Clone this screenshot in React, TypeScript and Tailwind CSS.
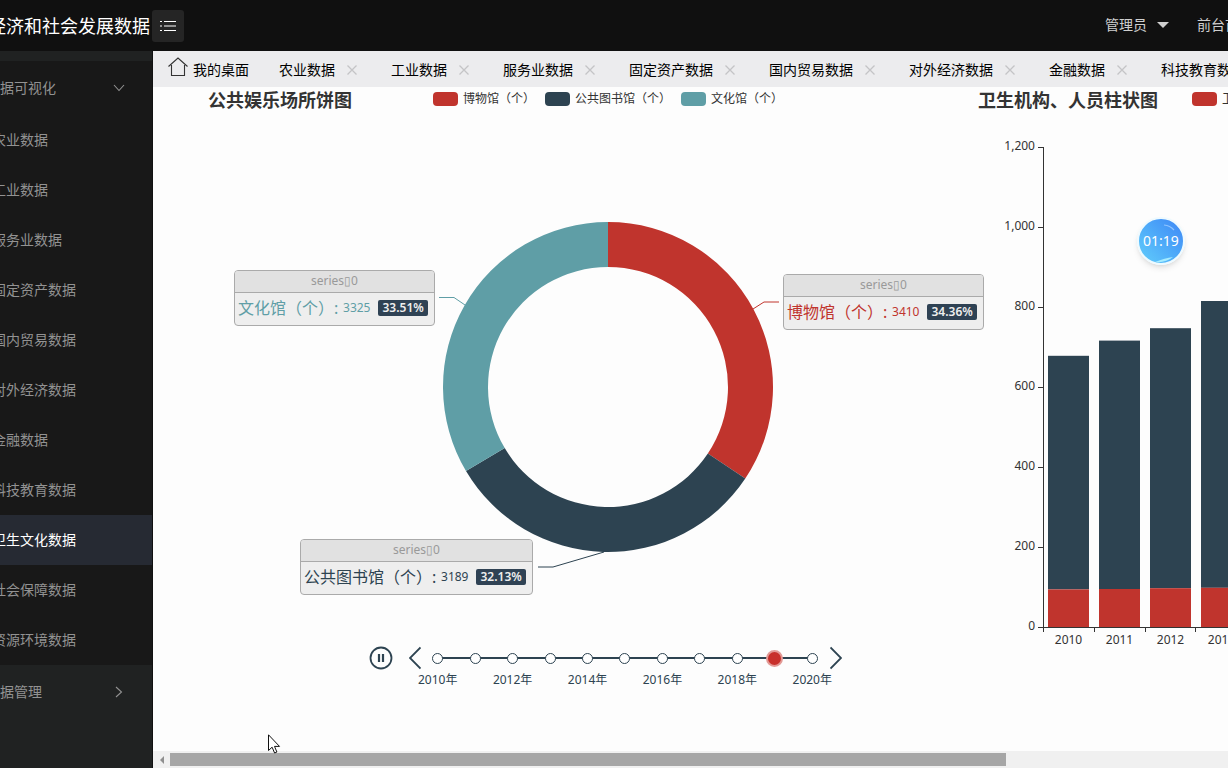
import React from "react";

const RED = "#c0342d";
const NAVY = "#2d4351";
const TEAL = "#5f9ea6";

const menuItems = [
  "农业数据",
  "工业数据",
  "服务业数据",
  "固定资产数据",
  "国内贸易数据",
  "对外经济数据",
  "金融数据",
  "科技教育数据",
  "卫生文化数据",
  "社会保障数据",
  "资源环境数据",
];

const tabs = menuItems.slice(0, 8);

const slices = [
  { name: "博物馆（个）", value: 3410, percent: "34.36%", color: RED, swatch: "bg-[#c0342d]" },
  { name: "公共图书馆（个）", value: 3189, percent: "32.13%", color: NAVY, swatch: "bg-[#2d4351]" },
  { name: "文化馆（个）", value: 3325, percent: "33.51%", color: TEAL, swatch: "bg-[#5f9ea6]" },
];

const bars = [
  { year: "2010", low: 94, total: 678 },
  { year: "2011", low: 95, total: 716 },
  { year: "2012", low: 97, total: 747 },
  { year: "2013", low: 98, total: 815 },
];

const years = Array.from({ length: 11 }, (_, i) => 2010 + i);
const activeYear = 2019;

function Header() {
  return (
    <header className="flex h-[51px] shrink-0 items-center overflow-hidden bg-[#101010]">
      <h1 className="flex w-[150px] shrink-0 justify-end overflow-hidden text-lg leading-6 whitespace-nowrap text-white">
        经济和社会发展数据
      </h1>
      <button
        type="button"
        aria-label="菜单"
        className="ml-[2px] flex size-8 shrink-0 items-center justify-center rounded-[3px] bg-[#252525] text-white"
      >
        <svg width="16" height="12" viewBox="0 0 16 12" stroke="currentColor" strokeWidth="1.2">
          <path d="M0 1.5h2M4 1.5h12M0 6h2M4 6h12M0 10.5h2M4 10.5h12" />
        </svg>
      </button>
      <nav className="-mr-[25px] ml-auto flex shrink-0 items-center pb-[2px] text-sm leading-5 text-[#cfcfcf]">
        <button type="button" className="flex items-center gap-[10px]">
          管理员
          <svg width="12" height="6" viewBox="0 0 12 6" fill="currentColor">
            <path d="M0 0h12L6 6z" />
          </svg>
        </button>
        <a href="#home" className="ml-7 whitespace-nowrap">
          前台首页
        </a>
      </nav>
    </header>
  );
}

function Sidebar() {
  return (
    <aside className="w-[153px] shrink-0 overflow-hidden border-r border-[#111] bg-[#202222] pt-[10px] text-sm text-[#929292]">
      <nav className="-ml-[14px]">
        <div className="bg-[#181818]">
          <button type="button" className="flex h-[54px] w-full items-center justify-between pr-[27px]">
            数据可视化
            <svg width="12" height="8" viewBox="0 0 12 8" fill="none" stroke="currentColor" strokeWidth="1.1">
              <path d="M1 1l5 5.5L11 1" />
            </svg>
          </button>
          <ul>
            {menuItems.map((item) => (
              <li key={item}>
                <a
                  href={"#" + item}
                  className={
                    item === "卫生文化数据"
                      ? "flex h-[50px] items-center bg-[#262a33] pl-[6px] text-white"
                      : "flex h-[50px] items-center pl-[6px]"
                  }
                >
                  {item}
                </a>
              </li>
            ))}
          </ul>
        </div>
        <button type="button" className="flex h-[54px] w-full items-center justify-between pr-[29px]">
          数据管理
          <svg width="8" height="12" viewBox="0 0 8 12" fill="none" stroke="currentColor" strokeWidth="1.1">
            <path d="M1 1l5.5 5L1 11" />
          </svg>
        </button>
      </nav>
    </aside>
  );
}

function TabBar() {
  return (
    <nav className="flex h-9 shrink-0 items-center overflow-hidden bg-[#ececee] text-sm leading-5 whitespace-nowrap text-black">
      <a href="#desk" className="flex shrink-0 items-center gap-[5px] px-[15px]">
        <svg width="20" height="20" viewBox="0 0 20 20" fill="none" stroke="#333" strokeWidth="1.1" className="-mt-1">
          <path d="M.5 9.5L10 1l9.500 8.500M3.500 8v10.500h13V8" />
        </svg>
        <span className="pt-[2px]">我的桌面</span>
      </a>
      {tabs.map((tab) => (
        <div key={tab} className="flex shrink-0 items-center gap-2 px-[15px] pt-[2px]">
          <a href={"#tab-" + tab}>{tab}</a>
          <button type="button" aria-label={"关闭" + tab} className="flex w-[18px] justify-center text-[#c4c4c6]">
            <svg width="10" height="10" viewBox="0 0 10 10" stroke="currentColor" strokeWidth="1.3">
              <path d="M.5.5l9 9M9.500.5l-9 9" />
            </svg>
          </button>
        </div>
      ))}
    </nav>
  );
}

function LegendItem({ name, swatch }: { name: string; swatch: string }) {
  return (
    <li className="flex items-center gap-[5px]">
      <span className={"h-[14px] w-[25px] rounded " + swatch} />
      <span>{name}</span>
    </li>
  );
}

function ringSlice(start: number, end: number) {
  const at = (r: number, t: number) =>
    `${608 + r * Math.sin(t * 2 * Math.PI)} ${387 - r * Math.cos(t * 2 * Math.PI)}`;
  return `M${at(165, start)}A165 165 0 0 1 ${at(165, end)}L${at(120, end)}A120 120 0 0 0 ${at(120, start)}Z`;
}

function SliceLabel({ index, place }: { index: number; place: string }) {
  const s = slices[index];
  return (
    <div
      className={
        "absolute overflow-hidden rounded border border-[#aaa] bg-[#eee] whitespace-nowrap " + place
      }
    >
      <div className="h-[22px] border-b border-[#aaa] bg-[#e1e1e1] text-center text-xs leading-5 text-[#999]">
        series▯0
      </div>
      <div className="flex h-8 items-center pr-[6px] pb-[2px] pl-[3px]" style={{ color: s.color }}>
        <span className="text-base leading-5">{s.name}</span>
        <span className="w-[9px] text-base leading-5">:</span>
        <span className="text-xs leading-5">{s.value}</span>
        <span className="ml-2 rounded-[2px] bg-[#2f4254] px-1 text-xs leading-4 font-semibold text-[#eee]">
          {s.percent}
        </span>
      </div>
    </div>
  );
}

function Timeline() {
  return (
    <div className="flex pl-[216px] text-[#2d4351]">
      <button type="button" aria-label="暂停" className="size-6">
        <svg width="24" height="24" viewBox="0 0 24 24" fill="none" stroke="currentColor" strokeWidth="1.8">
          <circle cx="12" cy="12" r="10.500" />
          <path d="M10 8v8M14 8v8" strokeWidth="2.200" />
        </svg>
      </button>
      <button type="button" aria-label="上一年" className="ml-4 h-6 w-3">
        <svg width="12" height="24" viewBox="0 0 12 24" fill="none" stroke="currentColor" strokeWidth="1.800">
          <path d="M11.500 1.500L1 12l10.500 10.500" />
        </svg>
      </button>
      <ol className="-mr-px -ml-[2px] grid w-[412px] grid-cols-11">
        {years.map((year, i) => (
          <li key={year} className="relative flex flex-col items-center">
            {i < 10 && <span className="absolute top-[11px] left-1/2 h-[2px] w-full bg-[#2d4351]" />}
            <button type="button" aria-label={year + "年"} className="relative flex size-6 items-center justify-center">
              {year === activeYear ? (
                <span className="size-[17px] rounded-full border-2 border-[#e39a96] bg-[#c8302b]" />
              ) : (
                <span className="size-[11px] rounded-full border border-[#2d4351] bg-white" />
              )}
            </button>
            {i % 2 === 0 && <span className="text-xs leading-5 whitespace-nowrap">{year}年</span>}
          </li>
        ))}
      </ol>
      <button type="button" aria-label="下一年" className="h-6 w-3">
        <svg width="12" height="24" viewBox="0 0 12 24" fill="none" stroke="currentColor" strokeWidth="1.800">
          <path d="M.5 1.500L11 12L.5 22.500" />
        </svg>
      </button>
    </div>
  );
}

function PieChart() {
  const total = slices.reduce((sum, s) => sum + s.value, 0);
  let start = 0;
  return (
    <section className="relative w-[825px] shrink-0">
      <div className="flex h-6 items-center pl-[55px]">
        <h2 className="pt-px text-lg leading-6 font-bold text-[#333]">公共娱乐场所饼图</h2>
        <ul className="ml-[81px] flex gap-[10px] text-xs leading-4 text-[#333]">
          {slices.map((s) => (
            <LegendItem key={s.name} name={s.name} swatch={s.swatch} />
          ))}
        </ul>
      </div>
      <svg width="825" height="535" viewBox="153 111 825 535" fill="none" className="block">
        {slices.map((s) => {
          const from = start;
          start += s.value / total;
          return <path key={s.name} d={ringSlice(from, start)} fill={s.color} />;
        })}
        <path d="M753 309l11-7h15" stroke={RED} />
        <path d="M604 552l-51 15h-15" stroke={NAVY} />
        <path d="M465 305l-11-7.500h-15" stroke={TEAL} />
      </svg>
      <SliceLabel index={0} place="top-[187px] left-[630px]" />
      <SliceLabel index={1} place="top-[452px] left-[147px]" />
      <SliceLabel index={2} place="top-[183px] left-[81px]" />
      <Timeline />
    </section>
  );
}

function BarChart() {
  const y = (v: number) => 627 - v * 0.4;
  return (
    <section className="w-[800px] shrink-0">
      <div className="flex h-6 items-center">
        <h2 className="pt-px text-lg leading-6 font-bold text-[#333]">卫生机构、人员柱状图</h2>
        <ul className="ml-[34px] flex text-xs leading-4 text-[#333]">
          <LegendItem name="卫生机构（万个）" swatch="bg-[#c0342d]" />
        </ul>
      </div>
      <svg width="800" height="560" viewBox="978 111 800 560" className="block text-xs" fill="#333">
        {bars.map((b, i) => {
          const x = 1048 + i * 51;
          return (
            <g key={b.year}>
              <rect x={x} y={y(b.total)} width="41" height={(b.total - b.low) * 0.4} fill={NAVY} />
              <rect x={x} y={y(b.low)} width="41" height={b.low * 0.4} fill={RED} />
              <text x={x + 20.5} y="644" textAnchor="middle">
                {b.year}
              </text>
            </g>
          );
        })}
        {[0, 200, 400, 600, 800, 1000, 1200].map((v) => (
          <g key={v}>
            <path d={`M1038 ${y(v) + 0.5}h5`} stroke="#333" />
            <text x="1035" y={y(v) + 3} textAnchor="end">
              {v.toLocaleString("en-US")}
            </text>
          </g>
        ))}
        <path
          d="M1043.500 147v485M1043 627.500h500M1094.500 627v5M1145.500 627v5M1195.500 627v5"
          stroke="#333"
          fill="none"
        />
      </svg>
    </section>
  );
}

function ScrollBar() {
  return (
    <div className="flex h-[17px] shrink-0 items-center bg-[#f0f0f0]">
      <button type="button" aria-label="向左滚动" className="flex w-[17px] shrink-0 justify-center text-[#8f8f8f]">
        <svg width="4" height="8" viewBox="0 0 4 8" fill="currentColor">
          <path d="M4 0v8L0 4z" />
        </svg>
      </button>
      <div className="flex-1">
        <div className="h-[13px] w-[79%] bg-[#a6a6a6]" />
      </div>
    </div>
  );
}

export default function App() {
  return (
    <div className="relative flex h-screen flex-col overflow-hidden font-['Noto_Sans','Noto_Sans_CJK_SC',sans-serif]">
      <Header />
      <div className="flex min-h-0 flex-1">
        <Sidebar />
        <main className="flex min-w-0 flex-1 flex-col bg-[#fdfdfd]">
          <TabBar />
          <div className="flex min-h-0 flex-1 overflow-hidden">
            <PieChart />
            <BarChart />
          </div>
          <ScrollBar />
        </main>
      </div>
      <div className="absolute top-[217px] right-[43px] flex size-12 items-center justify-center rounded-full border-2 border-[#eefaff] bg-linear-to-tr from-[#62cdfb] to-[#3f86f5] text-sm text-white shadow-md">
        01:19
        <svg width="44" height="44" viewBox="0 0 44 44" fill="none" className="absolute">
          <path d="M25 6q6 .5 10 5" stroke="#8fc4ff" strokeWidth="1.200" />
          <path d="M16 43q10-4 18-5q-7 6-18 5z" fill="#a5ecff" />
        </svg>
      </div>
      <svg width="13" height="20" viewBox="0 0 13 20" className="absolute top-[734px] left-[268px]">
        <path d="M.5.8v15.700l3.600-3.300 2.500 5.800 2.300-1-2.400-5.600h5z" fill="#fff" stroke="#111" />
      </svg>
    </div>
  );
}
